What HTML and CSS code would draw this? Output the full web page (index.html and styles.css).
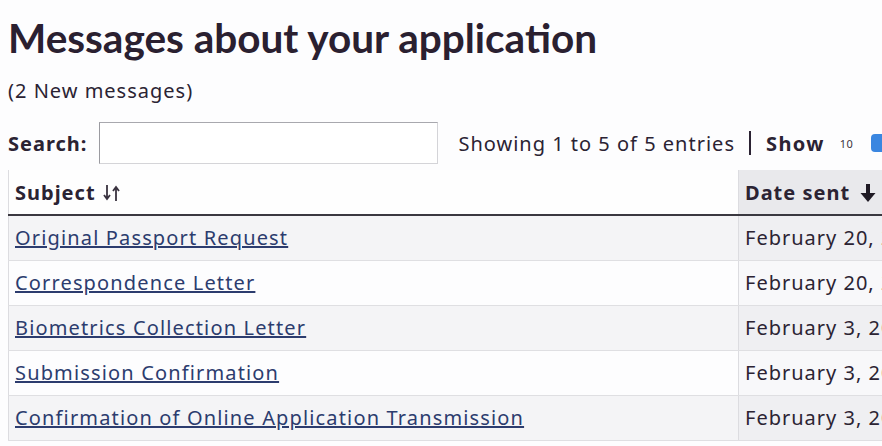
FILE: index.html
```html
<!DOCTYPE html>
<html lang="en">
<head>
  <meta charset="UTF-8" />
  <meta name="viewport" content="width=device-width, initial-scale=1.0" />
  <title>Messages about your application</title>
  <link rel="stylesheet" href="styles.css">
</head>
<body>
  <div class="page">
    <!-- Page heading -->
    <h1 class="page-title">Messages about your application</h1>
    <p class="new-count">(2 New messages)</p>

    <!-- Table controls -->
    <div class="controls">
      <label class="search">
        <span>Search:</span>
        <input type="text" />
      </label>
      <div class="info">Showing 1 to 5 of 5 entries</div>
      <div class="sep"></div>
      <div class="length">
        <span class="length-label">Show</span>
        <span class="length-num">10</span>
        <span class="length-btn"></span>
      </div>
    </div>

    <!-- Messages table -->
    <table class="messages">
      <thead>
        <tr>
          <th class="col-subject">
            Subject
            <svg class="sort" width="20" height="20" viewBox="0 0 20 20">
              <path d="M5 2v14M2 12l3 4 3-4" fill="none" stroke="#3a3340" stroke-width="1.8"/>
              <path d="M14 18V4M11 8l3-4 3 4" fill="none" stroke="#3a3340" stroke-width="1.8"/>
            </svg>
          </th>
          <th class="col-date sorted">
            Date sent
            <svg class="sort-down" width="18" height="20" viewBox="0 0 18 20">
              <path d="M9 1v12" stroke="#1f1a24" stroke-width="4"/>
              <path d="M1.5 10L9 19l7.5-9z" fill="#1f1a24"/>
            </svg>
          </th>
        </tr>
      </thead>
      <tbody>
        <tr>
          <td><a href="#">Original Passport Request</a></td>
          <td class="col-date">February 20, 2024</td>
        </tr>
        <tr>
          <td><a href="#">Correspondence Letter</a></td>
          <td class="col-date">February 20, 2024</td>
        </tr>
        <tr>
          <td><a href="#">Biometrics Collection Letter</a></td>
          <td class="col-date">February 3, 2024</td>
        </tr>
        <tr>
          <td><a href="#">Submission Confirmation</a></td>
          <td class="col-date">February 3, 2024</td>
        </tr>
        <tr>
          <td><a href="#">Confirmation of Online Application Transmission</a></td>
          <td class="col-date">February 3, 2024</td>
        </tr>
      </tbody>
    </table>
  </div>
</body>
</html>
```

FILE: styles.css
```css
/* Base */
* {
  box-sizing: border-box;
  margin: 0;
  padding: 0;
}
body {
  background: #fdfdfe;
  color: #2b2333;
  font-family: "Noto Sans", "Open Sans", Arial, sans-serif;
  font-size: 20px;
  letter-spacing: 1px;
  overflow: hidden;
}
.page {
  width: 1100px;
  padding: 14px 8px 0;
}

/* Heading */
.page-title {
  font-family: Lato, "Noto Sans", sans-serif;
  font-size: 40.5px;
  font-weight: 700;
  letter-spacing: 0;
  line-height: 48px;
  color: #2a2030;
}
.new-count {
  font-size: 20px;
  line-height: 26px;
  margin-top: 16px;
}

/* Controls */
.controls {
  display: flex;
  align-items: center;
  margin-top: 18px;
  height: 42px;
}
.search {
  display: flex;
  align-items: center;
  font-weight: 700;
}
.search input {
  width: 339px;
  height: 42px;
  margin-left: 12px;
  border: 1px solid #d4d4d8;
  border-left-color: #9a9aa0;
  border-top-color: #a8a8ae;
  background: #fff;
}
.info {
  margin-left: 20px;
}
.sep {
  width: 2px;
  height: 24px;
  background: #2b2333;
  margin: 0 15px 0 14px;
}
.length {
  display: flex;
  align-items: center;
}
.length-label {
  font-weight: 700;
  letter-spacing: 1.4px;
}
.length-num {
  font-size: 11px;
  letter-spacing: 0.5px;
  margin-left: 15px;
  color: #3a3440;
}
.length-btn {
  width: 14px;
  height: 18px;
  margin-left: 18px;
  border-radius: 4px 0 0 4px;
  background: #3a86e0;
}

/* Table */
.messages {
  margin-top: 6px;
  border-collapse: collapse;
  border-left: 1px solid #dcdce0;
}
.messages th {
  height: 45px;
  text-align: left;
  font-weight: 700;
  padding: 0 6px;
  border-bottom: 2px solid #3a3840;
  background: #fefefe;
  white-space: nowrap;
}
.messages th.sorted {
  background: #e9e9ec;
}
.sort {
  vertical-align: -3px;
}
.sort-down {
  margin-left: 3px;
  vertical-align: -3px;
}
.col-subject {
  width: 730px;
}
.col-date {
  border-left: 1px solid #dcdce0;
}
.messages td {
  height: 45px;
  padding: 0 6px;
  border-bottom: 1px solid #dfdfe2;
  white-space: nowrap;
}
.messages tbody tr:nth-child(odd) td {
  background: #f4f4f6;
}
.messages tbody tr:nth-child(odd) td.col-date {
  background: #efeff2;
}
.messages tbody tr:nth-child(even) td.col-date {
  background: #f8f8fa;
}
.messages a {
  color: #2c3c6e;
  letter-spacing: 1.15px;
}
```
